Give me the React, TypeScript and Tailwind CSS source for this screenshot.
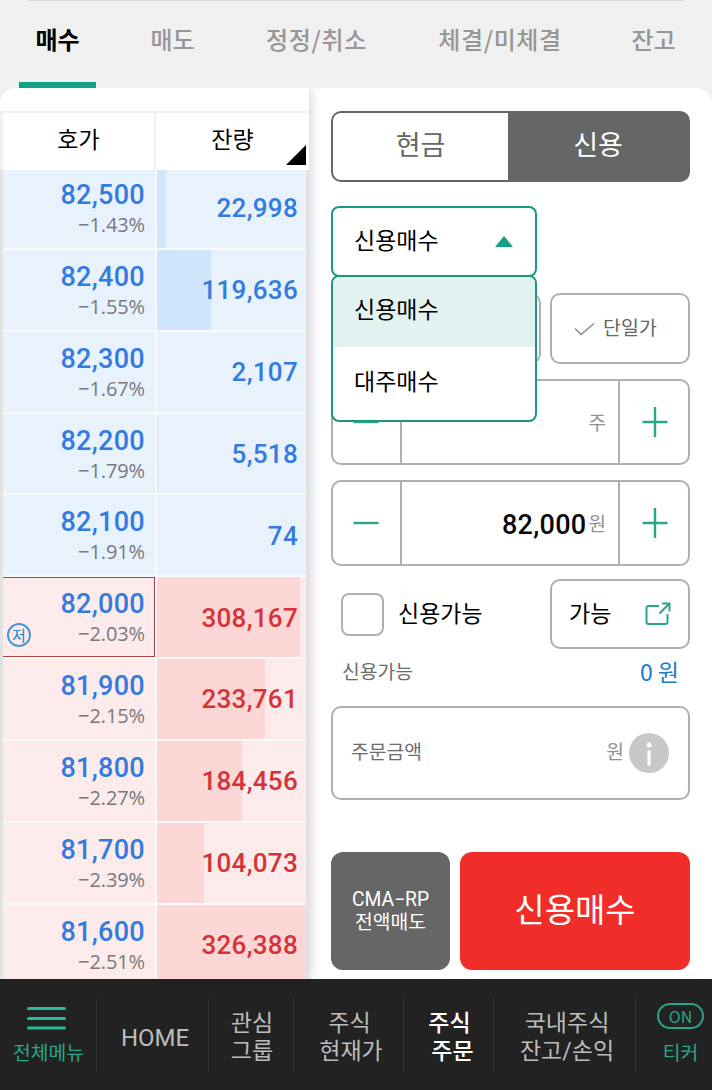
import { useState } from "react";
import clsx from "clsx";

const KR = "font-['Noto_Sans_CJK_KR',sans-serif]";
const NUM = "font-['Roboto','Noto_Sans_CJK_KR',sans-serif]";

const tabs = [
  { name: "매수", cls: "ml-[19px] w-[77px]" },
  { name: "매도", cls: "ml-[38px] w-[77px]" },
  { name: "정정/취소", cls: "ml-[55px] w-[101px] tracking-[0.7px]" },
  { name: "체결/미체결", cls: "ml-[68px] w-[130px] tracking-[0.6px]" },
  { name: "잔고", cls: "ml-[50px] w-[77px]" },
];

type Quote = { price: string; rate: string; qty: string; bar: number; side: "ask" | "bid"; low?: boolean };

const quotes: Quote[] = [
  { price: "82,500", rate: "−1.43%", qty: "22,998", bar: 9, side: "ask" },
  { price: "82,400", rate: "−1.55%", qty: "119,636", bar: 54, side: "ask" },
  { price: "82,300", rate: "−1.67%", qty: "2,107", bar: 0, side: "ask" },
  { price: "82,200", rate: "−1.79%", qty: "5,518", bar: 1, side: "ask" },
  { price: "82,100", rate: "−1.91%", qty: "74", bar: 0, side: "ask" },
  { price: "82,000", rate: "−2.03%", qty: "308,167", bar: 143, side: "bid", low: true },
  { price: "81,900", rate: "−2.15%", qty: "233,761", bar: 108, side: "bid" },
  { price: "81,800", rate: "−2.27%", qty: "184,456", bar: 85, side: "bid" },
  { price: "81,700", rate: "−2.39%", qty: "104,073", bar: 47, side: "bid" },
  { price: "81,600", rate: "−2.51%", qty: "326,388", bar: 149, side: "bid" },
];

const options = ["신용매수", "대주매수"];

function QuoteRow({ q }: { q: Quote }) {
  const ask = q.side === "ask";
  return (
    <div className="flex h-[81.85px] shrink-0 gap-[2px] pt-[2px]">
      <div
        className={clsx(
          "relative w-[152px] text-right",
          ask ? "bg-[#e7f2fd]" : "bg-[#fdeaea]",
          q.low ? "border border-l-0 border-[#b5403f] pt-[11px] pr-[9px]" : "pt-[12px] pr-[10px]"
        )}
      >
        <div className={clsx(NUM, "text-[27px] leading-[30px] font-medium tracking-[0.3px] text-[#347bdf]")}>{q.price}</div>
        <div className="font-['Open_Sans',sans-serif] text-[20px] leading-[29px] tracking-[-0.1px] text-[#77797d]">{q.rate}</div>
        {q.low && (
          <span className={clsx(KR, "absolute bottom-[9px] left-[4px] flex size-[24px] items-center justify-center rounded-full border-2 border-[#4a98d4] pb-[2px] text-[15px] leading-none text-[#2483c9]")}>
            저
          </span>
        )}
      </div>
      <div className={clsx("relative flex w-[149px] items-center justify-end pt-px pr-[8px]", ask ? "bg-[#e7f2fd]" : "bg-[#fdeaea]")}>
        <div className={clsx("absolute inset-y-0 left-0", ask ? "bg-[#d0e5fe]" : "bg-[#fdd6d6]")} style={{ width: q.bar }} />
        <span className={clsx(NUM, "relative text-[26px] leading-none font-medium tracking-[0.3px]", ask ? "text-[#347bdf]" : "text-[#d53338]")}>
          {q.qty}
        </span>
      </div>
    </div>
  );
}

function Minus() {
  return (
    <svg width="26" height="32" viewBox="0 0 26 32" stroke="#2aa587" strokeWidth="2.4">
      <path d="M0.5 16h25" />
    </svg>
  );
}

function Plus() {
  return (
    <svg width="26" height="32" viewBox="0 0 26 32" stroke="#2aa587" strokeWidth="2.4">
      <path d="M0.5 16h25M13 1v30" />
    </svg>
  );
}

function Stepper({ value, unit }: { value: string; unit: string }) {
  return (
    <div className="flex h-[86px] rounded-[10px] border-2 border-[#b0b0b0] bg-white">
      <button className="flex w-[67px] items-center justify-center pr-[2px]">
        <Minus />
      </button>
      <div className="flex flex-1 items-center justify-end gap-[2px] border-x-2 border-[#b0b0b0] pr-[12px]">
        <span className={clsx(NUM, "pt-[5px] text-[27px] leading-none font-medium tracking-[0.3px] text-[#080808]")}>{value}</span>
        <span className={clsx(KR, "pb-[2px] text-[19px] leading-none text-[#929292]")}>{unit}</span>
      </div>
      <button className="flex w-[68px] items-center justify-center pl-[2px]">
        <Plus />
      </button>
    </div>
  );
}

function NavItem({ width, lines, active }: { width: string; lines: string[]; active?: boolean }) {
  return (
    <button
      className={clsx(
        NUM,
        "flex h-[75px] flex-col items-center justify-center border-r border-[#303030] pt-[6px] text-[23px] leading-[28px]",
        width,
        active ? "font-medium text-white" : "text-[#bcbcbc]"
      )}
    >
      {lines.map((l) => (
        <span key={l} className={clsx(l === "주문" ? "pl-[8px]" : l.length > 2 ? "pl-[5px]" : "pl-[2px]", l === "HOME" && "text-[24px]")}>
          {l}
        </span>
      ))}
    </button>
  );
}

export default function App() {
  const [tab, setTab] = useState("매수");
  const [selected, setSelected] = useState("신용매수");
  const [open, setOpen] = useState(true);

  return (
    <div className={clsx(KR, "flex h-[1090px] w-[712px] flex-col overflow-hidden bg-[#f0f0f0] text-black")}>
      <header className="h-[88px]">
        <div className="mx-[28px] h-px bg-[#dadada]" />
        <nav className="flex h-[87px]">
          {tabs.map((t) => (
            <button
              key={t.name}
              onClick={() => setTab(t.name)}
              className={clsx(
                "flex shrink-0 justify-center border-b-[6px] pt-[23px] text-[24px] leading-[30px] whitespace-nowrap",
                t.cls,
                tab === t.name ? "border-[#12a083] font-bold text-black" : "border-transparent font-medium text-[#969696]"
              )}
            >
              {t.name}
            </button>
          ))}
        </nav>
      </header>

      <main className="flex h-[891px] overflow-hidden rounded-t-[16px] bg-white">
        <section className="z-10 flex w-[309px] shrink-0 flex-col bg-white shadow-[0_0_12px_rgba(0,0,0,0.22)]">
          <div className="h-[23px] shrink-0" />
          <div className="relative flex h-[59px] shrink-0 border-t-2 border-l-[3px] border-[#f0f0f0] text-[23px] leading-[51px]">
            <div className="w-[153px] border-r-2 border-[#f0f0f0] text-center">호가</div>
            <div className="w-[153px] text-center">잔량</div>
            <svg className="absolute right-[3px] bottom-[5px]" width="20" height="20" viewBox="0 0 20 20">
              <path d="M20 0v20H0z" fill="#000" />
            </svg>
          </div>
          <div className="flex h-[809px] flex-col overflow-hidden border-r-[3px] border-l-[3px] border-[#e2e2e2]">
            <div className="-mt-[4px] bg-[#f8fafc]">
              {quotes.map((q) => (
                <QuoteRow key={q.price} q={q} />
              ))}
            </div>
          </div>
        </section>

        <section className="flex-1 px-[22px] pt-[23px]">
          <div className="flex h-[71px] overflow-hidden rounded-[10px] border-2 border-[#666] bg-[#666] text-[27px]">
            <button className="w-[175px] bg-white pb-[5px] text-[#666]">현금</button>
            <button className="flex-1 pb-[5px] text-white">신용</button>
          </div>

          <div className="relative z-20 mt-[24px] w-[206px] text-[23px]">
            <button
              onClick={() => setOpen(!open)}
              className="flex h-[71px] w-full items-center justify-between rounded-[8px] border-2 border-[#1a9a7d] bg-white pr-[22px] pl-[21px]"
            >
              <span className="-mt-[4px]">{selected}</span>
              <svg width="18" height="11" viewBox="0 0 18 11">
                <path d="M9 0l9 11H0z" fill="#12a083" />
              </svg>
            </button>
            {open && (
              <ul className="absolute top-[69px] left-0 h-[147px] w-full overflow-hidden rounded-[8px] border-2 border-[#1a9a7d] bg-white">
                {options.map((o) => (
                  <li
                    key={o}
                    onClick={() => setSelected(o)}
                    className={clsx("h-[70px] pl-[21px]", o === selected ? "bg-[#e1f2f0] leading-[62px]" : "leading-[67px]")}
                  >
                    {o}
                  </li>
                ))}
              </ul>
            )}
          </div>

          <div className="mt-[16px] flex justify-between">
            <div className="h-[71px] w-[210px] rounded-[10px] border-[2.5px] border-[#b0b0b0]" />
            <button className="flex h-[71px] w-[140px] items-center justify-center gap-[8px] rounded-[10px] border-[2.5px] border-[#b0b0b0] pr-[9px] text-[19.5px] text-[#666]">
              <svg width="21" height="14" viewBox="0 0 21 14" fill="none" stroke="#8c8c8c" strokeWidth="1.600">
                <path d="M1 6.500l6 6L20 1.500" />
              </svg>
              <span className="-mt-[3px]">단일가</span>
            </button>
          </div>

          <div className="mt-[15px]">
            <Stepper value="" unit="주" />
          </div>
          <div className="mt-[15px]">
            <Stepper value="82,000" unit="원" />
          </div>

          <div className="mt-[13px] flex h-[70px] items-center text-[23px]">
            <span className="ml-[10px] size-[43px] rounded-[8px] border-2 border-[#b0b0b0]" />
            <span className="-mt-[4px] ml-[14px] flex-1">신용가능</span>
            <button className="flex h-[70px] w-[140px] items-center justify-between rounded-[10px] border-[2.5px] border-[#b0b0b0] pr-[17px] pl-[17px]">
              <span className="-mt-[4px]">가능</span>
              <svg width="26" height="24" viewBox="0 0 26 24" fill="none" stroke="#2aa587" strokeWidth="2">
                <path d="M14 4H3.500a2 2 0 0 0-2 2v14a2 2 0 0 0 2 2h17a2 2 0 0 0 2-2V12" />
                <path d="M14.500 11.500L24 2M17 1.500h7.500v8" />
              </svg>
            </button>
          </div>

          <div className="flex h-[46px] items-center justify-between pr-[11px] pb-[2px] pl-[11px]">
            <span className="text-[19.3px] text-[#6c6c6c]">신용가능</span>
            <span className="text-[23px] text-[#1a7ad0]">0 원</span>
          </div>

          <div className="mt-[11px] flex h-[94px] items-center rounded-[10px] border-[2.5px] border-[#b0b0b0] pr-[19px] pl-[18px] text-[19.3px]">
            <span className="-mt-[3px] flex-1 text-[#6c6c6c]">주문금액</span>
            <span className="-mt-[3px] text-[#929292]">원</span>
            <svg className="ml-[5px]" width="40" height="40" viewBox="0 0 40 40">
              <circle cx="20" cy="20" r="20" fill="#c8c8c8" />
              <circle cx="20" cy="12" r="2.500" fill="#fff" />
              <path d="M20 18.500v13" stroke="#fff" strokeWidth="3.200" strokeLinecap="round" />
            </svg>
          </div>

          <div className="mt-[52px] flex h-[118px] gap-[10px]">
            <button className={clsx(NUM, "w-[119px] rounded-[12px] bg-[#666] text-[19.3px] leading-[23px] text-white")}>
              <span className="block">CMA−RP</span>
              <span className="block">전액매도</span>
            </button>
            <button className="flex-1 rounded-[12px] bg-[#f02d28] pb-[4px] text-[33px] text-white">신용매수</button>
          </div>
        </section>
      </main>

      <footer className="flex h-[111px] items-center bg-[#222]">
        <button className="flex h-[75px] w-[97px] flex-col items-center border-r border-[#303030] pt-[9px] text-[19.3px] text-[#2aa587]">
          <svg className="mr-[4px]" width="39" height="25" viewBox="0 0 39 25" stroke="#22bd99" strokeWidth="3" strokeLinecap="round">
            <path d="M1.500 2.500h36M1.500 12.500h36M1.500 22h36" />
          </svg>
          <span className="mt-[8px] pl-px leading-[26px]">전체메뉴</span>
        </button>
        <NavItem width="w-[112px]" lines={["HOME"]} />
        <NavItem width="w-[85px]" lines={["관심", "그룹"]} />
        <NavItem width="w-[110px]" lines={["주식", "현재가"]} />
        <NavItem width="w-[90px]" lines={["주식", "주문"]} active />
        <NavItem width="w-[142px]" lines={["국내주식", "잔고/손익"]} />
        <button className="flex h-[75px] flex-1 flex-col items-center pt-[6px] pl-[13px] text-[19.3px] text-[#2aa587]">
          <span className="flex h-[26px] w-[47px] items-center justify-center rounded-full border-2 border-[#2aa587] pb-px text-[16px] leading-none">ON</span>
          <span className="mt-[10px] leading-[26px]">티커</span>
        </button>
      </footer>
    </div>
  );
}
